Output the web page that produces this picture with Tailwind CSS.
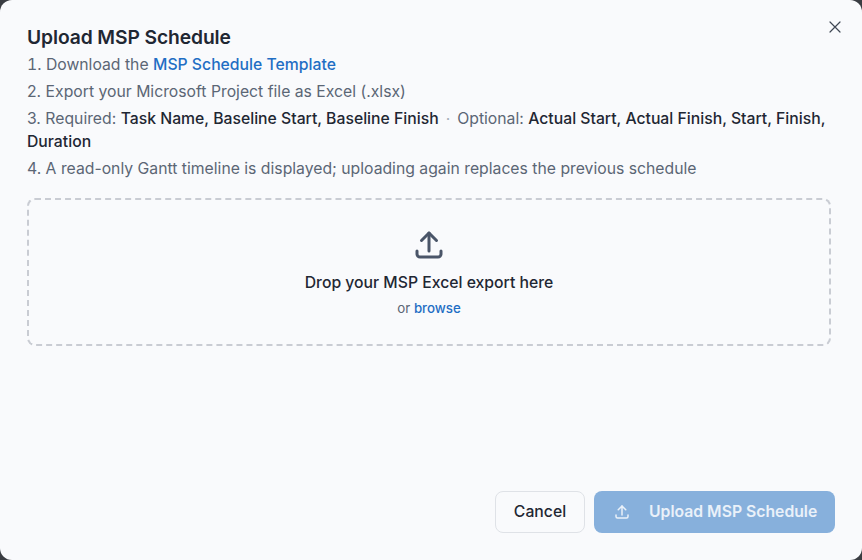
<!doctype html>
<html><head><meta charset="utf-8"><script src="https://cdn.jsdelivr.net/npm/@tailwindcss/browser@4"></script></head>
<body class="bg-[#3a3d42]">
<div class="relative flex h-[560px] w-[862px] flex-col overflow-hidden rounded-[12px] bg-[#f9fafc] px-[27px] pt-[24px] pb-[27px] font-['Inter',sans-serif]">
  <button class="absolute right-[20px] top-[20px] text-[#3f4754]">
    <svg width="14" height="14" viewBox="0 0 14 14" fill="none" stroke="currentColor" stroke-width="1.2" stroke-linecap="round"><path d="M2 2l10 10M12 2L2 12"/></svg>
  </button>
  <h2 class="text-[19.25px] leading-[26px] font-semibold tracking-[-0.1px] text-[#1f2733]">Upload MSP Schedule</h2>
  <div class="mt-[3px] text-[15.75px] leading-[23px] text-[#5b6675]">
    <p class="mb-[4px]"><span class="tabular-nums">1.</span> Download the <a class="font-[450] text-[#1f6ec4]">MSP Schedule Template</a></p>
    <p class="mb-[4px]">2. Export your Microsoft Project file as Excel (.xlsx)</p>
    <p class="mb-[4px]">3. Required: <span class="font-[450] text-[#1f2733]">Task Name, Baseline Start, Baseline Finish</span><span class="mx-[7px] text-[#a5adb8]">·</span>Optional: <span class="font-[450] text-[#1f2733]">Actual Start, Actual Finish, Start, Finish, Duration</span></p>
    <p>4. A read-only Gantt timeline is displayed; uploading again replaces the previous schedule</p>
  </div>
  <div class="mt-[18px] mr-[4px] flex h-[148px] flex-col items-center rounded-[8px] border-2 border-dashed border-[#c9ccd3] pt-[27px]">
    <svg width="36" height="36" viewBox="0 0 24 24" fill="none" stroke="#4a5568" stroke-width="2" stroke-linecap="round" stroke-linejoin="round"><path d="M4 16v2a2 2 0 0 0 2 2h12a2 2 0 0 0 2-2v-2"/><path d="M7 9l5-5 5 5"/><path d="M12 4v12"/></svg>
    <p class="mt-[8px] text-[15.75px] leading-[24px] font-[450] text-[#1f2733]">Drop your MSP Excel export here</p>
    <p class="mt-[3px] text-[13.3px] leading-[20px] text-[#5b6675]">or <a class="font-[450] text-[#1f6ec4]">browse</a></p>
  </div>
  <div class="mt-auto flex justify-end gap-[9px]">
    <button class="h-[42px] w-[90px] rounded-[8px] border border-[#dfe2e7] bg-[#f9fafc] text-[15.75px] font-[450] text-[#1f2733]">Cancel</button>
    <button class="flex h-[42px] w-[241px] items-center rounded-[8px] bg-[#87b0dc] pl-[19px] text-[15.75px] font-semibold text-[#eaf1f9]">
      <svg class="mr-[18px]" width="18" height="18" viewBox="0 0 24 24" fill="none" stroke="currentColor" stroke-width="2" stroke-linecap="round" stroke-linejoin="round"><path d="M4 16v2a2 2 0 0 0 2 2h12a2 2 0 0 0 2-2v-2"/><path d="M7 9l5-5 5 5"/><path d="M12 4v12"/></svg>
      Upload MSP Schedule
    </button>
  </div>
</div>
</body></html>
